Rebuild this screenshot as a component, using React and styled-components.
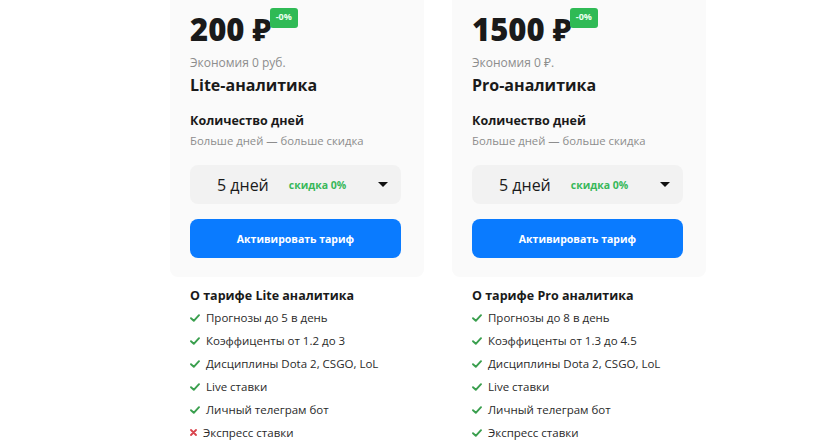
import React from "react";
import styled, { createGlobalStyle } from "styled-components";

const GlobalStyle = createGlobalStyle`
    * {
        box-sizing: border-box;
    }
    body {
        margin: 0;
        background: #ffffff;
        font-family: "Open Sans", "Noto Sans", sans-serif;
        color: #1b1b1b;
    }
`;

const Page = styled.div`
    display: flex;
    gap: 28px;
    padding-left: 170px;
    margin-top: -12px;
`;

const Column = styled.div`
    width: 254px;
    display: flex;
    flex-direction: column;
`;

const Card = styled.div`
    background: #fafafa;
    border-radius: 8px;
    padding: 23px 23px 19px 20px;
    display: flex;
    flex-direction: column;
`;

const PriceRow = styled.div`
    display: flex;
    align-items: flex-start;
`;

const Price = styled.div`
    font-size: 31px;
    line-height: 36px;
    font-weight: 800;
    color: #1a1a1a;
`;

const Badge = styled.span`
    margin-top: -3px;
    margin-left: -2px;
    height: 20px;
    line-height: 18px;
    padding: 0 6px;
    border-radius: 3px;
    background: #2fba55;
    color: #eafff0;
    font-size: 9px;
    font-weight: 700;
`;

const Savings = styled.div`
    margin-top: 8px;
    font-size: 12px;
    line-height: 16px;
    color: #8d8d8d;
`;

const PlanName = styled.div`
    margin-top: 3px;
    font-size: 16px;
    line-height: 22px;
    font-weight: 700;
    color: #1a1a1a;
`;

const Label = styled.div`
    margin-top: 16px;
    font-size: 12.5px;
    line-height: 18px;
    font-weight: 700;
    color: #1a1a1a;
`;

const Hint = styled.div`
    margin-top: 3px;
    font-size: 11.3px;
    line-height: 16px;
    color: #8d8d8d;
`;

const Select = styled.div`
    margin-top: 16px;
    height: 39px;
    border-radius: 8px;
    background: #f2f2f2;
    display: flex;
    align-items: center;
    padding: 0 13px 0 27px;
`;

const Days = styled.span`
    font-size: 16px;
    color: #1a1a1a;
`;

const Discount = styled.span`
    margin-left: 20px;
    font-size: 10.5px;
    font-weight: 700;
    color: #38b85a;
`;

const Caret = styled.span`
    margin-left: auto;
    width: 0;
    height: 0;
    border-left: 5px solid transparent;
    border-right: 5px solid transparent;
    border-top: 5px solid #111;
`;

const Button = styled.button`
    margin-top: 15px;
    height: 39px;
    border: none;
    border-radius: 8px;
    background: #0a7bff;
    color: #ffffff;
    font-family: inherit;
    font-size: 10.5px;
    font-weight: 700;
    cursor: pointer;
`;

const About = styled.div`
    padding: 10px 20px 0;
`;

const AboutTitle = styled.div`
    font-size: 12.5px;
    line-height: 18px;
    font-weight: 700;
    color: #1a1a1a;
`;

const Features = styled.ul`
    list-style: none;
    margin: 1px 0 0;
    padding: 0;
`;

const Feature = styled.li`
    display: flex;
    align-items: center;
    gap: 6px;
    height: 23px;
    font-size: 11.5px;
    color: #2a2a2a;
`;

const Icon = styled.svg`
    flex: none;
`;

const Check = () => (
    <Icon width="10" height="8" viewBox="0 0 10 8">
        <path d="M1 4.2 L3.8 6.8 L9 1.2" fill="none" stroke="#3a9f4e" strokeWidth="1.9" strokeLinecap="round" strokeLinejoin="round" />
    </Icon>
);

const Cross = () => (
    <Icon width="7" height="7" viewBox="0 0 7 7">
        <path d="M1 1 L6 6 M6 1 L1 6" fill="none" stroke="#d9444d" strokeWidth="1.8" strokeLinecap="round" />
    </Icon>
);

const plans = [
    {
        price: "200 ₽",
        savings: "Экономия 0 руб.",
        name: "Lite-аналитика",
        about: "О тарифе Lite аналитика",
        features: [
            ["Прогнозы до 5 в день", true],
            ["Коэффиценты от 1.2 до 3", true],
            ["Дисциплины Dota 2, CSGO, LoL", true],
            ["Live ставки", true],
            ["Личный телеграм бот", true],
            ["Экспресс ставки", false],
        ],
    },
    {
        price: "1500 ₽",
        savings: "Экономия 0 ₽.",
        name: "Pro-аналитика",
        about: "О тарифе Pro аналитика",
        features: [
            ["Прогнозы до 8 в день", true],
            ["Коэффиценты от 1.3 до 4.5", true],
            ["Дисциплины Dota 2, CSGO, LoL", true],
            ["Live ставки", true],
            ["Личный телеграм бот", true],
            ["Экспресс ставки", true],
        ],
    },
];

const App = () => {
    return (
        <>
            <GlobalStyle />
            <Page>
                {plans.map((plan) => (
                    <Column key={plan.name}>
                        <Card>
                            <PriceRow>
                                <Price>{plan.price}</Price>
                                <Badge>-0%</Badge>
                            </PriceRow>
                            <Savings>{plan.savings}</Savings>
                            <PlanName>{plan.name}</PlanName>
                            <Label>Количество дней</Label>
                            <Hint>Больше дней — больше скидка</Hint>
                            <Select>
                                <Days>5 дней</Days>
                                <Discount>скидка 0%</Discount>
                                <Caret />
                            </Select>
                            <Button>Активировать тариф</Button>
                        </Card>
                        <About>
                            <AboutTitle>{plan.about}</AboutTitle>
                            <Features>
                                {plan.features.map(([text, ok]) => (
                                    <Feature key={text}>
                                        {ok ? <Check /> : <Cross />}
                                        {text}
                                    </Feature>
                                ))}
                            </Features>
                        </About>
                    </Column>
                ))}
            </Page>
        </>
    );
};

export default App;
